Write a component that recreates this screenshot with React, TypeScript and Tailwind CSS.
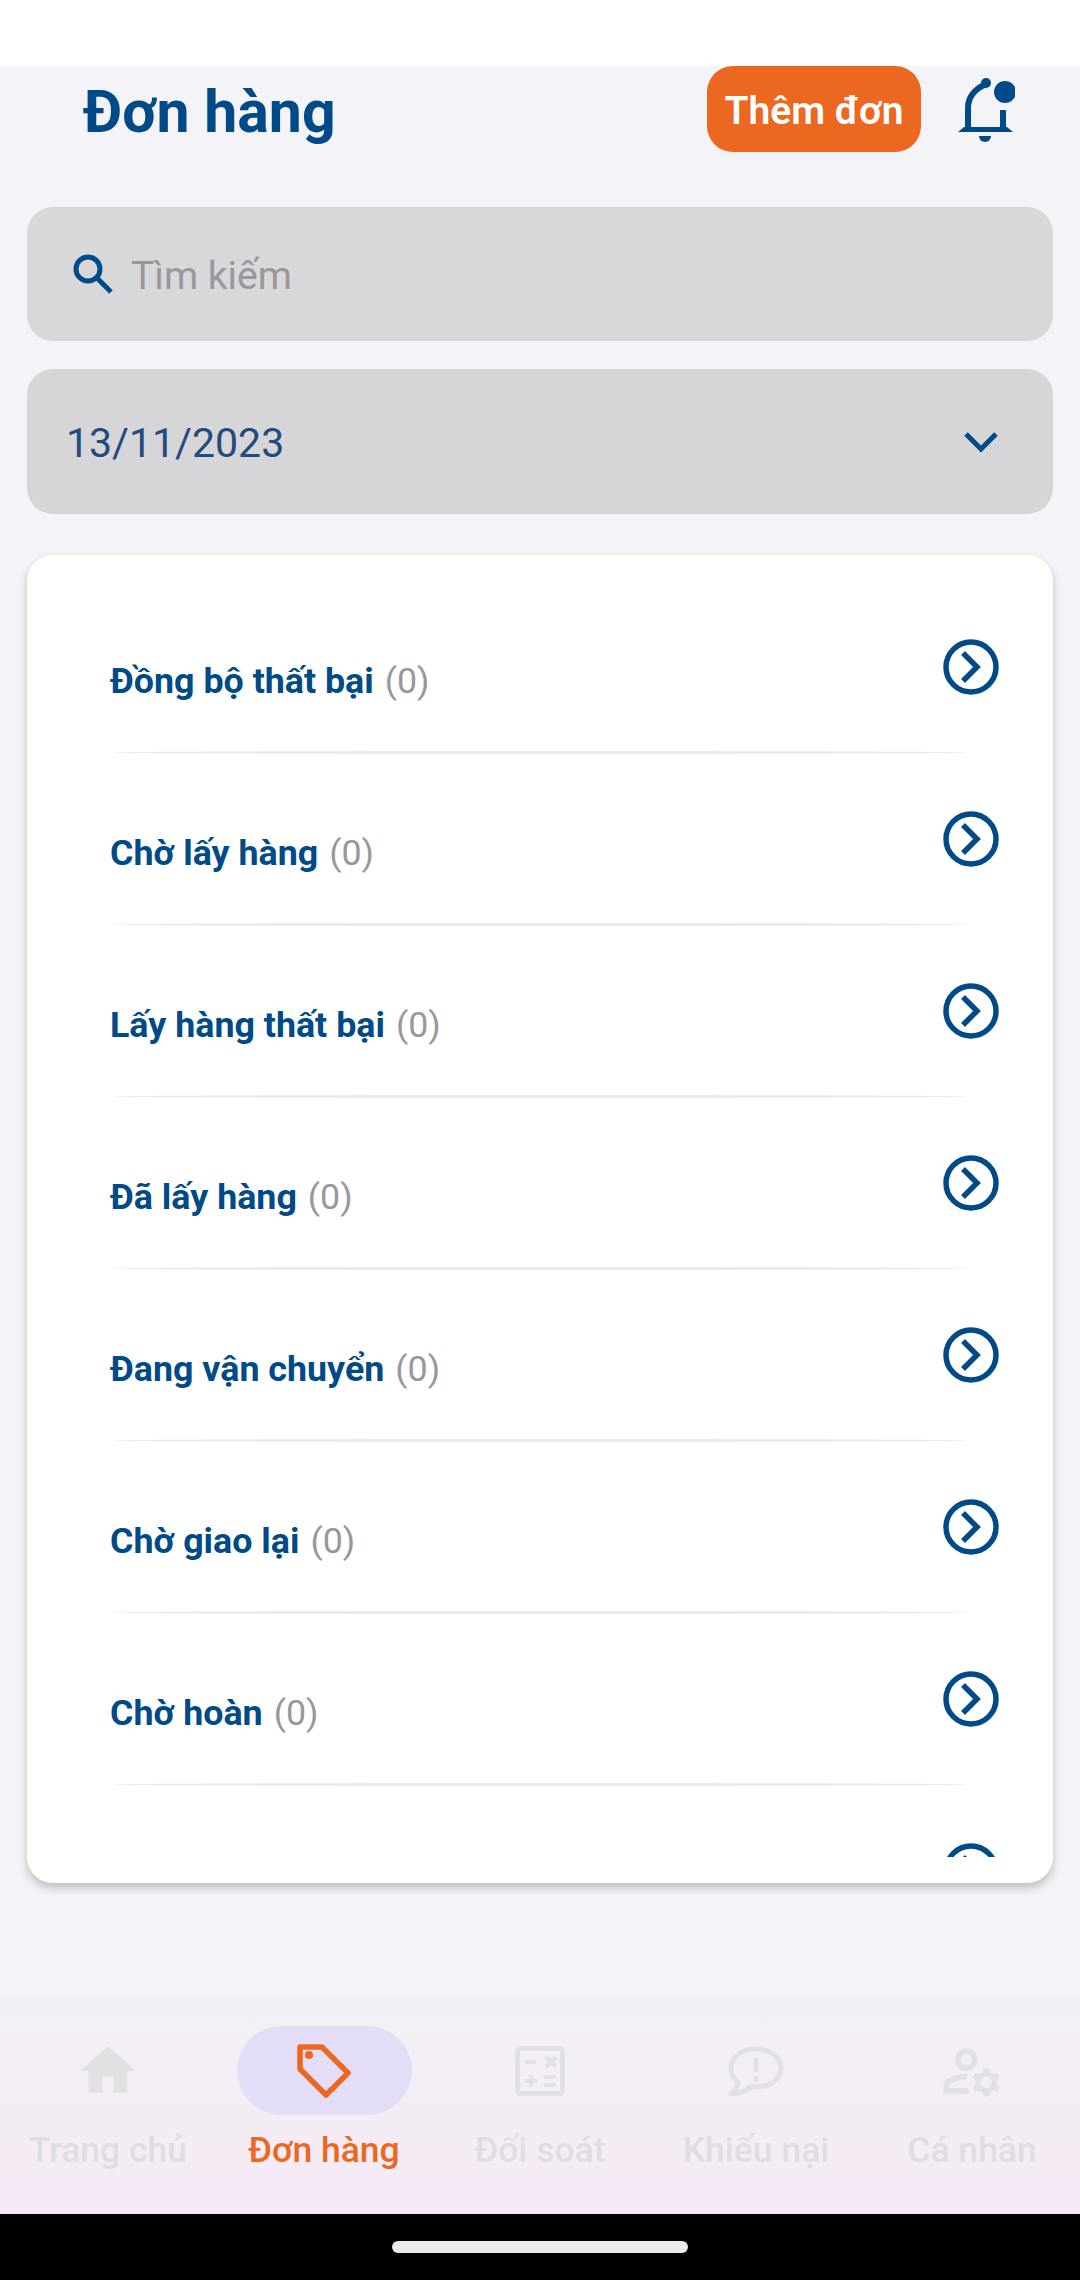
import React from 'react';
import { MdHome, MdOutlineManageAccounts } from 'react-icons/md';

const statuses = [
  'Đồng bộ thất bại',
  'Chờ lấy hàng',
  'Lấy hàng thất bại',
  'Đã lấy hàng',
  'Đang vận chuyển',
  'Chờ giao lại',
  'Chờ hoàn',
  '',
];

function BellIcon() {
  return (
    <svg width="60" height="70" viewBox="0 0 60 70" fill="none" className="text-[#004b87]">
      <path d="M13 54V33C13 21 20 14 31 9" stroke="currentColor" strokeWidth="6" />
      <circle cx="31" cy="8" r="5" fill="currentColor" />
      <path d="M48 35V54" stroke="currentColor" strokeWidth="6" />
      <path d="M3 57L9 52H52L58 57Z" fill="currentColor" />
      <path d="M24 61H36A6 6 0 0 1 24 61Z" fill="currentColor" />
      <circle cx="50" cy="17" r="11" fill="currentColor" />
    </svg>
  );
}

function SearchIcon() {
  return (
    <svg width="40" height="40" viewBox="0 0 40 40" fill="none" className="shrink-0 text-[#004b87]">
      <circle cx="15" cy="15" r="12" stroke="currentColor" strokeWidth="5" />
      <path d="M24 24L38 38" stroke="currentColor" strokeWidth="5" />
    </svg>
  );
}

function ChevronCircle() {
  return (
    <svg width="56" height="56" viewBox="0 0 56 56" fill="none" className="shrink-0 text-[#004b87]">
      <circle cx="28" cy="28" r="25" stroke="currentColor" strokeWidth="5.5" />
      <path d="M20 14L34 28L20 42" stroke="currentColor" strokeWidth="5.5" />
    </svg>
  );
}

function TagIcon() {
  return (
    <svg width="56" height="56" viewBox="0 0 56 56" fill="none" className="text-[#ec671f]">
      <path d="M4 4H26L52 30L30 52L4 26Z" stroke="currentColor" strokeWidth="5.5" strokeLinejoin="round" />
      <circle cx="13" cy="12" r="4" fill="currentColor" />
    </svg>
  );
}

function CalcIcon() {
  return (
    <svg width="50" height="50" viewBox="0 0 50 50" fill="none" className="text-[#e2e0e3]">
      <rect x="2.5" y="2.5" width="45" height="45" rx="3" stroke="currentColor" strokeWidth="5" />
      <path d="M10 16H21M31 11L41 21M41 11L31 21M10 35H22M16 29V41M29 31H41M29 39H41" stroke="currentColor" strokeWidth="4" />
    </svg>
  );
}

function AlertBubble() {
  return (
    <svg width="56" height="50" viewBox="0 0 56 50" fill="none" className="text-[#e2e0e3]">
      <path d="M28 3C14 3 3 11 3 22C3 28 6 33 10 36C9 41 7 45 3 48C11 48 18 44 22 41C24 41 26 41 28 41C42 41 53 33 53 22C53 11 42 3 28 3Z" stroke="currentColor" strokeWidth="5" strokeLinejoin="round" />
      <path d="M28 12V26M28 30V36" stroke="currentColor" strokeWidth="4.5" />
    </svg>
  );
}

function NavItem({ label, icon, active }: { label: string; icon: React.ReactNode; active?: boolean }) {
  return (
    <div className="flex flex-col items-center">
      <div className={`flex h-[89px] w-[175px] items-center justify-center rounded-[45px] ${active ? 'bg-[#e4ddf8]' : ''}`}>
        {icon}
      </div>
      <span className={`mt-[12px] text-[35.5px] font-medium leading-[46px] ${active ? 'text-[#ec671f]' : 'text-[#e0dde0]'}`}>
        {label}
      </span>
    </div>
  );
}

export default function App() {
  return (
    <div className="flex h-[2280px] w-[1080px] flex-col overflow-hidden bg-[#f4f3f7] font-['Roboto',sans-serif]">
      <div className="h-[66px] bg-white" />

      {/* Header */}
      <div className="flex h-[86px] items-center pl-[83px] pr-[65px]">
        <h1 className="mt-[4px] flex-1 text-[59px] font-bold leading-none text-[#004b87]">Đơn hàng</h1>
        <button className="flex h-[86px] w-[214px] items-center justify-center rounded-[26px] bg-[#ec671f] pt-[4px] text-[39px] font-semibold text-white">
          Thêm đơn
        </button>
        <div className="ml-[34px] mt-[2px]">
          <BellIcon />
        </div>
      </div>

      {/* Search + date */}
      <div className="mx-[27px] mt-[55px] flex h-[134px] items-center gap-[18px] rounded-[26px] bg-[#d8d7da] pl-[46px]">
        <SearchIcon />
        <span className="mt-[5px] text-[39px] text-[#98989c]">Tìm kiếm</span>
      </div>
      <div className="mx-[27px] mt-[28px] flex h-[145px] items-center justify-between rounded-[26px] bg-[#d6d5d8] pl-[39px] pr-[54px]">
        <span className="mt-[5px] text-[41px] text-[#1f4b7e]">13/11/2023</span>
        <svg width="36" height="24" viewBox="0 0 36 24" fill="none" className="text-[#004b87]">
          <path d="M3 4L18 19L33 4" stroke="currentColor" strokeWidth="5" />
        </svg>
      </div>

      {/* Status list */}
      <div className="mx-[27px] mt-[41px] h-[1328px] shrink-0 rounded-[26px] bg-white pb-[26px] pt-[27px] shadow-[0_5px_10px_rgba(0,0,0,0.22)]">
        <div className="h-full overflow-hidden">
          {statuses.map((label, i) => (
            <div key={i} className="h-[172px] px-[83px]">
              <div className="flex h-[169px] items-center justify-between">
                {label ? (
                  <div className="mt-[28px] flex items-baseline gap-[11px] text-[35.8px] leading-[44px]">
                    <span className="font-bold text-[#004b87]">{label}</span>
                    <span className="text-[#98989c]">(0)</span>
                  </div>
                ) : (
                  <div />
                )}
                <div className="mr-[-29px]">
                  <ChevronCircle />
                </div>
              </div>
              <div className="mx-[4px] h-[3px] rounded-[50%] bg-[#e9e8ec]" />
            </div>
          ))}
        </div>
      </div>

      {/* Bottom nav */}
      <div className="mt-[112px] grid h-[219px] grid-cols-5 justify-items-center bg-linear-to-b from-[#f2f0f5] to-[#f6eaf6] pt-[31px]">
        <NavItem label="Trang chủ" icon={<MdHome size={66} className="text-[#e2e0e3]" />} />
        <NavItem label="Đơn hàng" active icon={<TagIcon />} />
        <NavItem label="Đối soát" icon={<CalcIcon />} />
        <NavItem label="Khiếu nại" icon={<AlertBubble />} />
        <NavItem label="Cá nhân" icon={<MdOutlineManageAccounts size={68} className="text-[#e2e0e3]" />} />
      </div>

      {/* System gesture bar */}
      <div className="flex flex-1 items-center justify-center bg-black">
        <div className="h-[12px] w-[296px] rounded-[6px] bg-[#ebebed]" />
      </div>
    </div>
  );
}
